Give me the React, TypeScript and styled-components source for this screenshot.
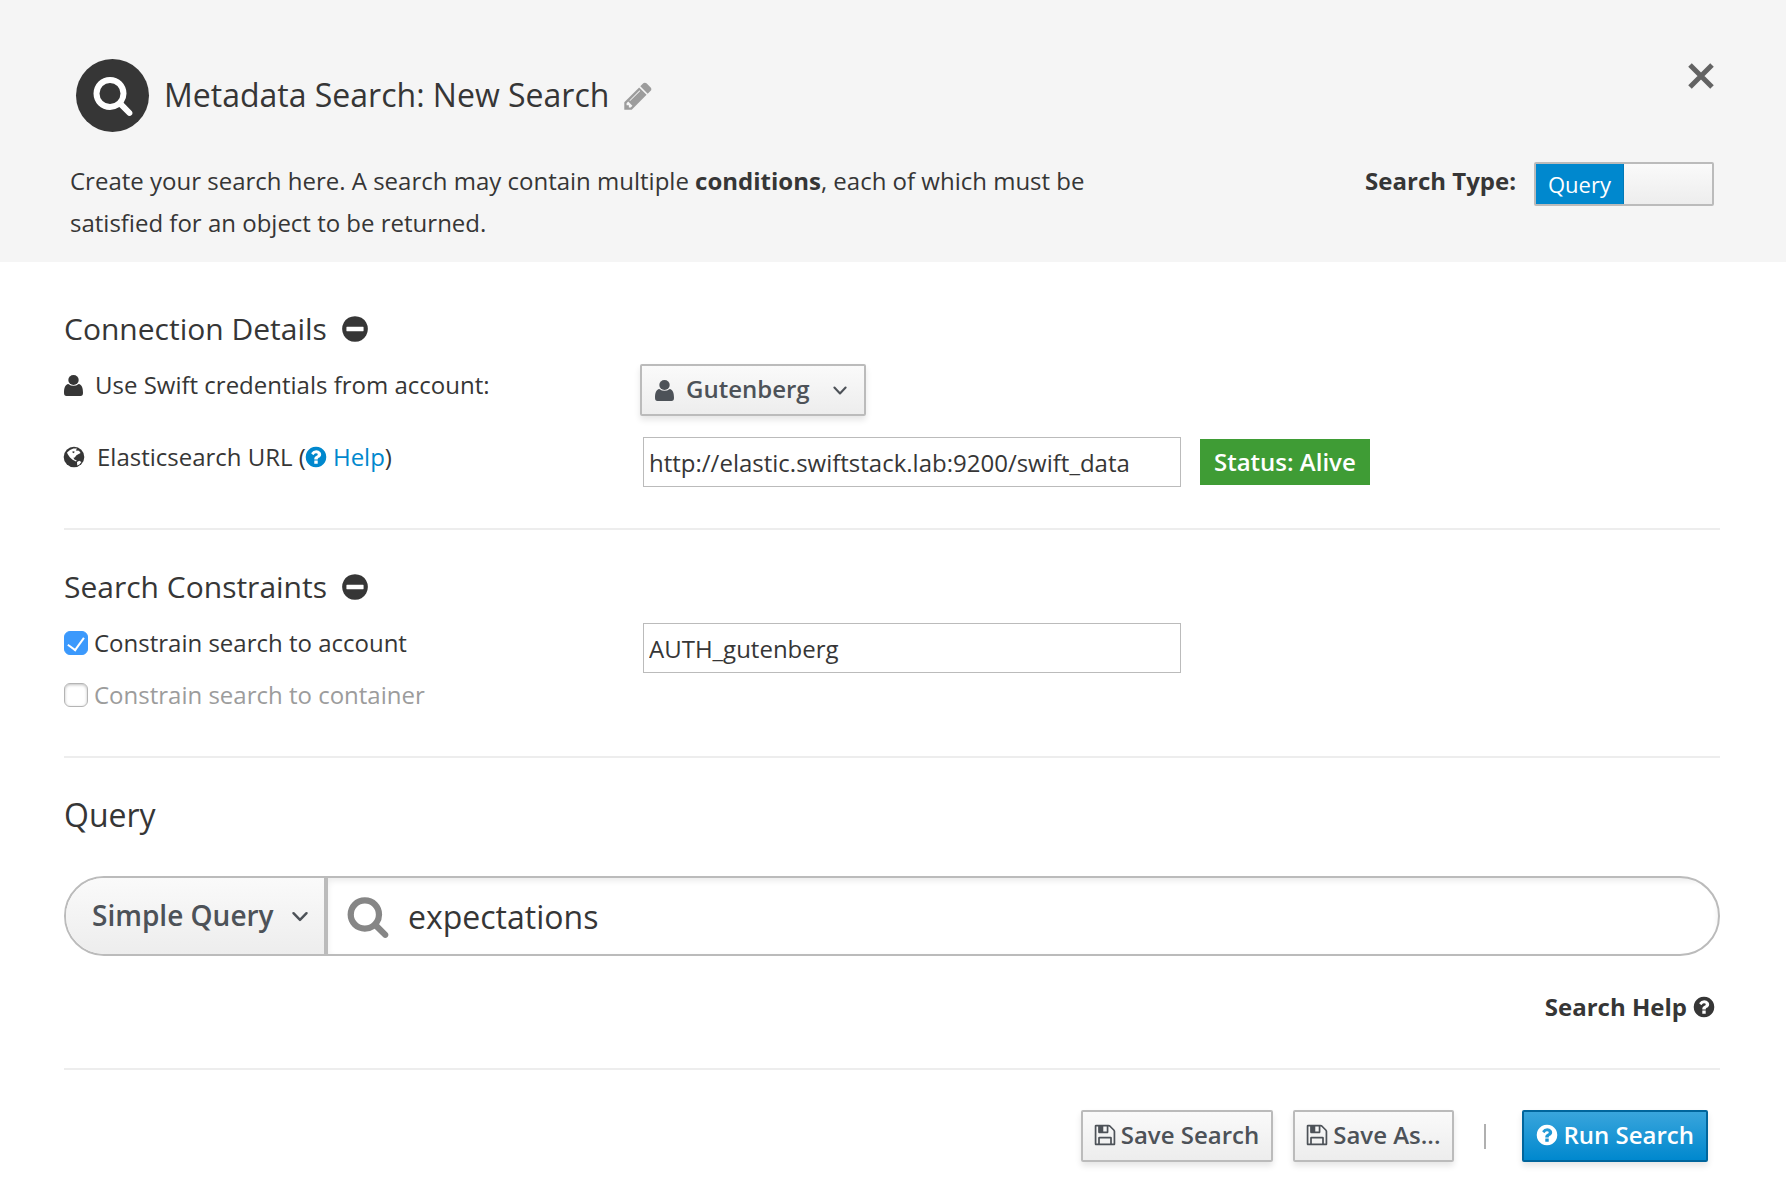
import React, { useState } from "react";
import styled, { createGlobalStyle, css } from "styled-components";

const GlobalStyle = createGlobalStyle`
  * { box-sizing: border-box; }
  body {
    margin: 0;
    background: #fff;
    color: #363636;
    font-family: "Open Sans", "Noto Sans", sans-serif;
    font-size: 24px;
    line-height: 42px;
  }
  button, input, select { font: inherit; color: inherit; }
`;

const icons = {
  search:
    "M1216 832q0-185-131.5-316.5t-316.5-131.5-316.5 131.5-131.5 316.5 131.5 316.5 316.5 131.5 316.5-131.5 131.5-316.5zm512 832q0 52-38 90t-90 38q-54 0-90-38l-343-342q-179 124-399 124-143 0-273.5-55.5t-225-150-150-225-55.5-273.5 55.5-273.5 150-225 225-150 273.5-55.5 273.5 55.5 225 150 150 225 55.5 273.5q0 220-124 399l343 343q37 37 37 90z",
  question:
    "M1024 1376v-192q0-14-9-23t-23-9h-192q-14 0-23 9t-9 23v192q0 14 9 23t23 9h192q14 0 23-9t9-23zm256-672q0-88-55.5-163t-138.5-116-170-41q-243 0-371 213-15 24 8 42l132 100q7 6 19 6 16 0 25-12 53-68 86-92 34-24 86-24 48 0 85.5 26t37.5 59q0 38-20 61t-68 45q-63 28-115.5 86.5t-52.5 125.5v36q0 14 9 23t23 9h192q14 0 23-9t9-23q0-19 21.5-49.5t54.5-49.5q32-18 49-28.5t46-35 44.5-48 28-60.5 12.5-81zm384 192q0 209-103 385.5t-279.5 279.5-385.5 103-385.5-103-279.5-279.5-103-385.5 103-385.5 279.5-279.5 385.5-103 385.5 103 279.5 279.5 103 385.5z",
  minus:
    "M1408 1000v-208q0-24-24-24h-976q-24 0-24 24v208q0 24 24 24h976q24 0 24-24zm256-104q0 209-103 385.5t-279.5 279.5-385.5 103-385.5-103-279.5-279.5-103-385.5 103-385.5 279.5-279.5 385.5-103 385.5 103 279.5 279.5 103 385.5z",
  pencil:
    "M491 1536l91-91-235-235-91 91v107h128v128h107zm523-928q0-22-22-22-10 0-17 7l-542 542q-7 7-7 17 0 22 22 22 10 0 17-7l542-542q7-7 7-17zm-54-192l416 416-832 832h-416v-416zm683 96q0 53-37 90l-166 166-416-416 166-165q36-38 90-38 53 0 91 38l235 234q37 39 37 91z",
  floppy:
    "M512 1536h768v-384h-768v384zm896 0h128v-896q0-14-10-38.5t-20-34.5l-281-281q-10-10-34-20t-39-10v416q0 40-28 68t-68 28h-576q-40 0-68-28t-28-68v-416h-128v1280h128v-416q0-40 28-68t68-28h832q40 0 68 28t28 68v416zm-384-928v-320q0-13-9.5-22.5t-22.5-9.5h-192q-13 0-22.5 9.5t-9.5 22.5v320q0 13 9.5 22.5t22.5 9.5h192q13 0 22.5-9.5t9.5-22.5zm640 32v928q0 40-28 68t-68 28h-1344q-40 0-68-28t-28-68v-1344q0-40 28-68t68-28h928q40 0 88 20t76 48l280 280q28 28 48 76t20 88z",
};

const Svg = styled.svg<{ $size: number }>`
  display: block;
  flex: none;
  width: ${(p) => p.$size}px;
  height: ${(p) => p.$size}px;
  fill: currentColor;
`;

const Icon = ({ name, size }: { name: keyof typeof icons; size: number }) => (
  <Svg $size={size} viewBox="0 0 1792 1792" aria-hidden="true">
    <path d={icons[name]} />
  </Svg>
);

const User = () => (
  <Svg $size={21} viewBox="0 0 21 21" aria-hidden="true">
    <ellipse cx="9.5" cy="5" rx="5.2" ry="5" />
    <path d="M4.3 8.9Q9.5 12.6 14.7 8.9C17.8 9.6 19 12.4 19 17.8Q19 21 16.5 21H2.5Q0 21 0 17.8C0 12.4 1.2 9.6 4.3 8.9z" />
  </Svg>
);

const Chevron = ({ size }: { size: number }) => (
  <Svg $size={size} viewBox="0 0 24 24" aria-hidden="true">
    <path
      d="M6.4 9.6 12 15.4 17.6 9.6"
      fill="none"
      stroke="currentColor"
      strokeWidth="2.1"
      strokeLinecap="round"
      strokeLinejoin="round"
    />
  </Svg>
);

const Globe = () => (
  <Svg $size={24} viewBox="0 0 24 24" aria-hidden="true">
    <circle cx="12" cy="12" r="10.3" />
    <path
      fill="#fff"
      d="M5 7.4 8 5 11.4 3.6 15 3.4 13.8 5.4 17 5.8 18.6 8 16.2 9.2 14.2 10.6 12.8 12.4 11.4 12.8 12.4 14.4 14.8 15.6 14 16.6 10.6 14.8 8 12.6 6.6 10.4 5.6 9zM15 17 17.2 15.8 19.4 17 17.4 19.4 15.2 20.4z"
    />
    <path d="M10.6 6.2 12.6 6.6 12 8.2 10.4 7.6z" />
  </Svg>
);

const Page = styled.main`
  min-width: 1400px;
`;

const Header = styled.header`
  display: flex;
  flex-direction: column;
  gap: 28px;
  padding: 59px 72px 18px 70px;
  background: #f5f5f5;
`;

const HeaderRow = styled.div`
  display: flex;
  justify-content: space-between;
  align-items: flex-start;
`;

const TitleGroup = styled.div`
  display: flex;
  align-items: center;
  padding: 0 0 2px 6px;
  margin-bottom: -2px;
`;

const Badge = styled.span`
  display: grid;
  place-items: center;
  width: 73px;
  height: 73px;
  margin-right: 15px;
  padding-bottom: 2px;
  border-radius: 50%;
  background: #363636;
  color: #fff;
`;

const Title = styled.h1`
  margin: 0 13px 0 0;
  padding-bottom: 2px;
  font-size: 32px;
  font-weight: 400;
  line-height: 44px;
`;

const IconButton = styled.button`
  display: inline-flex;
  padding: 0;
  border: 0;
  background: none;
  color: #9c9c9c;
  cursor: pointer;
`;

const DarkIconButton = styled(IconButton)`
  color: #363636;
`;

const CloseButton = styled(IconButton)`
  margin-top: 4px;
  color: #636363;
`;

const Intro = styled.p`
  max-width: 1060px;
  margin: 0;
`;

const TypeGroup = styled.div`
  display: flex;
  gap: 18px;
`;

const Strong = styled.strong`
  font-weight: 700;
`;

const Switch = styled.button`
  display: grid;
  grid-template-columns: 1fr 1fr;
  width: 180px;
  height: 44px;
  margin-top: 2px;
  padding: 0;
  border: 2px solid #bbb;
  border-radius: 2px;
  background: linear-gradient(#fafafa, #ededed);
  color: #fff;
  font-size: 22px;
  font-weight: 500;
  line-height: 40px;
  cursor: pointer;
`;

const SwitchOn = styled.span`
  background: #0088ce;
  border-right: 1px solid #0079b8;
  text-align: center;
`;

const Body = styled.form`
  padding: 0 66px 40px 64px;
`;

const Section = styled.section<{ $top: number }>`
  padding: ${(p) => p.$top}px 0 40px;
  border-bottom: 2px solid #ededed;
`;

const Heading = styled.div`
  display: flex;
  align-items: center;
  gap: 13px;
  margin-bottom: 14px;
`;

const H2 = styled.h2<{ $large?: boolean }>`
  margin: 0;
  font-size: ${(p) => (p.$large ? 32 : 30)}px;
  font-weight: 400;
  line-height: 42px;
`;

const FieldRow = styled.div<{ $height: number }>`
  display: grid;
  grid-template-columns: 576px 1fr;
  align-items: start;
  min-height: ${(p) => p.$height}px;
`;

const FieldLabel = styled.label<{ $muted?: boolean }>`
  display: flex;
  align-items: center;
  gap: 6px;
  color: ${(p) => (p.$muted ? "#9c9c9c" : "inherit")};
`;

const LabelGroup = styled.div`
  display: flex;
  align-items: center;
`;

const LabelIcon = styled.span<{ $bleed?: boolean }>`
  display: flex;
  width: ${(p) => (p.$bleed ? 35 : 31)}px;
  margin-left: ${(p) => (p.$bleed ? -2 : 0)}px;
`;

const Link = styled.a`
  display: inline-flex;
  align-items: center;
  gap: 5px;
  color: #0088ce;
  text-decoration: none;
`;

const UrlHelpLink = styled(Link)`
  margin-left: -2px;
`;

const Controls = styled.div`
  display: flex;
  align-items: center;
  gap: 19px;
  padding: 1px 0 0 3px;
`;

const TextInput = styled.input`
  width: 538px;
  height: 50px;
  padding: 0 5px;
  border: 1px solid #bbb;
  border-radius: 0;
  background: #fff;
`;

const Status = styled.span`
  padding: 2px 14px;
  background: #3f9c35;
  color: #fff;
  font-weight: 600;
  line-height: 42px;
`;

const raised = css`
  border: 2px solid #bbb;
  border-radius: 2px;
  background: linear-gradient(#fafafa, #ededed);
  box-shadow: 0 4px 6px rgba(3, 3, 3, 0.1);
  color: #4d5258;
  font-weight: 600;
`;

const SelectBox = styled.div`
  display: grid;
  grid-template-columns: 13px 24px 1fr 24px 12px;
  align-items: center;
  width: 226px;
  height: 52px;
  ${raised}
`;

const selectReset = css`
  grid-area: 1 / 1 / 2 / -1;
  width: 100%;
  height: 100%;
  border: 0;
  outline: 0;
  appearance: none;
  background: none;
  color: inherit;
  font-weight: inherit;
  cursor: pointer;
`;

const AccountSelect = styled.select`
  ${selectReset}
  padding: 0 40px 3px 44px;
`;

const LeftMark = styled.span`
  grid-area: 1 / 2;
  pointer-events: none;
`;

const RightMark = styled.span`
  grid-area: 1 / 4;
  pointer-events: none;
`;

const Checkbox = styled.input`
  appearance: none;
  display: grid;
  place-items: center;
  width: 24px;
  height: 24px;
  margin: 0;
  border: 1px solid #b4b4b4;
  border-radius: 6px;
  background: #fff;
  box-shadow: inset 0 1px 3px rgba(0, 0, 0, 0.25);

  &:checked {
    border-color: #3b99fc;
    background: #3b99fc;
    box-shadow: none;
  }
  &:checked::after {
    content: "";
    width: 8px;
    height: 14px;
    margin-top: -3px;
    border: solid #fff;
    border-width: 0 2px 2px 0;
    transform: rotate(36deg);
  }
`;

const QueryBar = styled.div`
  display: flex;
  height: 80px;
  margin-top: 40px;
  overflow: hidden;
  border: 2px solid #bbb;
  border-radius: 40px;
`;

const ModeBox = styled.div`
  display: grid;
  grid-template-columns: 26px 24px 1fr 28px 10px;
  align-items: center;
  width: 262px;
  border-right: 4px solid #bbb;
  background: linear-gradient(#fafafa, #ededed);
  color: #4d5258;
  font-size: 28px;
  font-weight: 600;
`;

const ModeSelect = styled.select`
  ${selectReset}
  padding: 0 40px 2px 26px;
`;

const QueryField = styled.label`
  display: flex;
  flex: 1;
  align-items: center;
  gap: 18px;
  padding-left: 18px;
  color: #868686;
  box-shadow: inset 0 3px 6px rgba(0, 0, 0, 0.08);
`;

const QueryInput = styled.input`
  flex: 1;
  height: 60px;
  padding: 0;
  border: 0;
  outline: 0;
  background: none;
  color: #363636;
  font-size: 32px;
`;

const HelpRow = styled.div`
  display: flex;
  justify-content: flex-end;
  padding: 30px 4px 0 0;
`;

const HelpLink = styled(Link)`
  color: #363636;
  font-weight: 700;
`;

const Actions = styled.footer`
  display: flex;
  justify-content: flex-end;
  align-items: center;
  padding: 40px 12px 0 0;
`;

const Button = styled.button<{ $primary?: boolean }>`
  display: inline-flex;
  align-items: center;
  gap: 4px;
  height: 52px;
  padding: 0 12px 2px 10px;
  ${raised}
  cursor: pointer;
  ${(p) =>
    p.$primary &&
    css`
      padding: 0 12px 2px 11px;
      border-color: #00659c;
      background: linear-gradient(#39a5dc, #0088ce);
      color: #fff;
    `}
  & + & { margin-left: 20px; }
`;

const Divider = styled.span`
  width: 2px;
  height: 25px;
  margin: 0 36px 0 30px;
  background: #b0b0b0;
`;

export default function App() {
  const [account, setAccount] = useState(true);
  const [container, setContainer] = useState(false);
  return (
    <Page>
      <GlobalStyle />
      <Header>
        <HeaderRow>
          <TitleGroup>
            <Badge>
              <Icon name="search" size={42} />
            </Badge>
            <Title>Metadata Search: New Search</Title>
            <IconButton type="button" aria-label="Edit name">
              <Icon name="pencil" size={32} />
            </IconButton>
          </TitleGroup>
          <CloseButton type="button" aria-label="Close">
            <Svg $size={26} viewBox="0 0 26 26" aria-hidden="true">
              <path d="M2 2 24 24M24 2 2 24" stroke="currentColor" strokeWidth="5" />
            </Svg>
          </CloseButton>
        </HeaderRow>
        <HeaderRow>
          <Intro>
            Create your search here. A search may contain multiple <Strong>conditions</Strong>, each of which must be
            satisfied for an object to be returned.
          </Intro>
          <TypeGroup>
            <Strong id="search-type">Search Type:</Strong>
            <Switch type="button" role="switch" aria-checked="true" aria-labelledby="search-type">
              <SwitchOn>Query</SwitchOn>
            </Switch>
          </TypeGroup>
        </HeaderRow>
      </Header>

      <Body onSubmit={(e) => e.preventDefault()}>
        <Section $top={46}>
          <Heading>
            <H2>Connection Details</H2>
            <DarkIconButton type="button" aria-label="Collapse connection details">
              <Icon name="minus" size={30} />
            </DarkIconButton>
          </Heading>
          <FieldRow $height={72}>
            <LabelGroup>
              <LabelIcon>
                <User />
              </LabelIcon>
              <FieldLabel htmlFor="account">Use Swift credentials from account:</FieldLabel>
            </LabelGroup>
            <SelectBox>
              <AccountSelect id="account">
                <option>Gutenberg</option>
              </AccountSelect>
              <LeftMark>
                <User />
              </LeftMark>
              <RightMark>
                <Chevron size={24} />
              </RightMark>
            </SelectBox>
          </FieldRow>
          <FieldRow $height={52}>
            <LabelGroup>
              <LabelIcon $bleed>
                <Globe />
              </LabelIcon>
              <FieldLabel htmlFor="url">Elasticsearch URL</FieldLabel>
              &nbsp;(
              <UrlHelpLink href="#help">
                <Icon name="question" size={24} />
                Help
              </UrlHelpLink>
              )
            </LabelGroup>
            <Controls>
              <TextInput id="url" defaultValue="http://elastic.swiftstack.lab:9200/swift_data" />
              <Status>Status: Alive</Status>
            </Controls>
          </FieldRow>
        </Section>

        <Section $top={36}>
          <Heading>
            <H2>Search Constraints</H2>
            <DarkIconButton type="button" aria-label="Collapse search constraints">
              <Icon name="minus" size={30} />
            </DarkIconButton>
          </Heading>
          <FieldRow $height={52}>
            <FieldLabel>
              <Checkbox type="checkbox" checked={account} onChange={(e) => setAccount(e.target.checked)} />
              Constrain search to account
            </FieldLabel>
            <Controls>
              <TextInput aria-label="Account" defaultValue="AUTH_gutenberg" />
            </Controls>
          </FieldRow>
          <FieldLabel $muted>
            <Checkbox type="checkbox" checked={container} onChange={(e) => setContainer(e.target.checked)} />
            Constrain search to container
          </FieldLabel>
        </Section>

        <Section $top={36}>
          <H2 $large>Query</H2>
          <QueryBar>
            <ModeBox>
              <ModeSelect aria-label="Query type">
                <option>Simple Query</option>
              </ModeSelect>
              <RightMark>
                <Chevron size={28} />
              </RightMark>
            </ModeBox>
            <QueryField>
              <Icon name="search" size={44} />
              <QueryInput aria-label="Query" defaultValue="expectations" />
            </QueryField>
          </QueryBar>
          <HelpRow>
            <HelpLink href="#search-help">
              Search Help
              <Icon name="question" size={24} />
            </HelpLink>
          </HelpRow>
        </Section>

        <Actions>
          <Button type="button">
            <Icon name="floppy" size={24} />
            Save Search
          </Button>
          <Button type="button">
            <Icon name="floppy" size={24} />
            Save As...
          </Button>
          <Divider />
          <Button type="submit" $primary>
            <Icon name="question" size={24} />
            Run Search
          </Button>
        </Actions>
      </Body>
    </Page>
  );
}
